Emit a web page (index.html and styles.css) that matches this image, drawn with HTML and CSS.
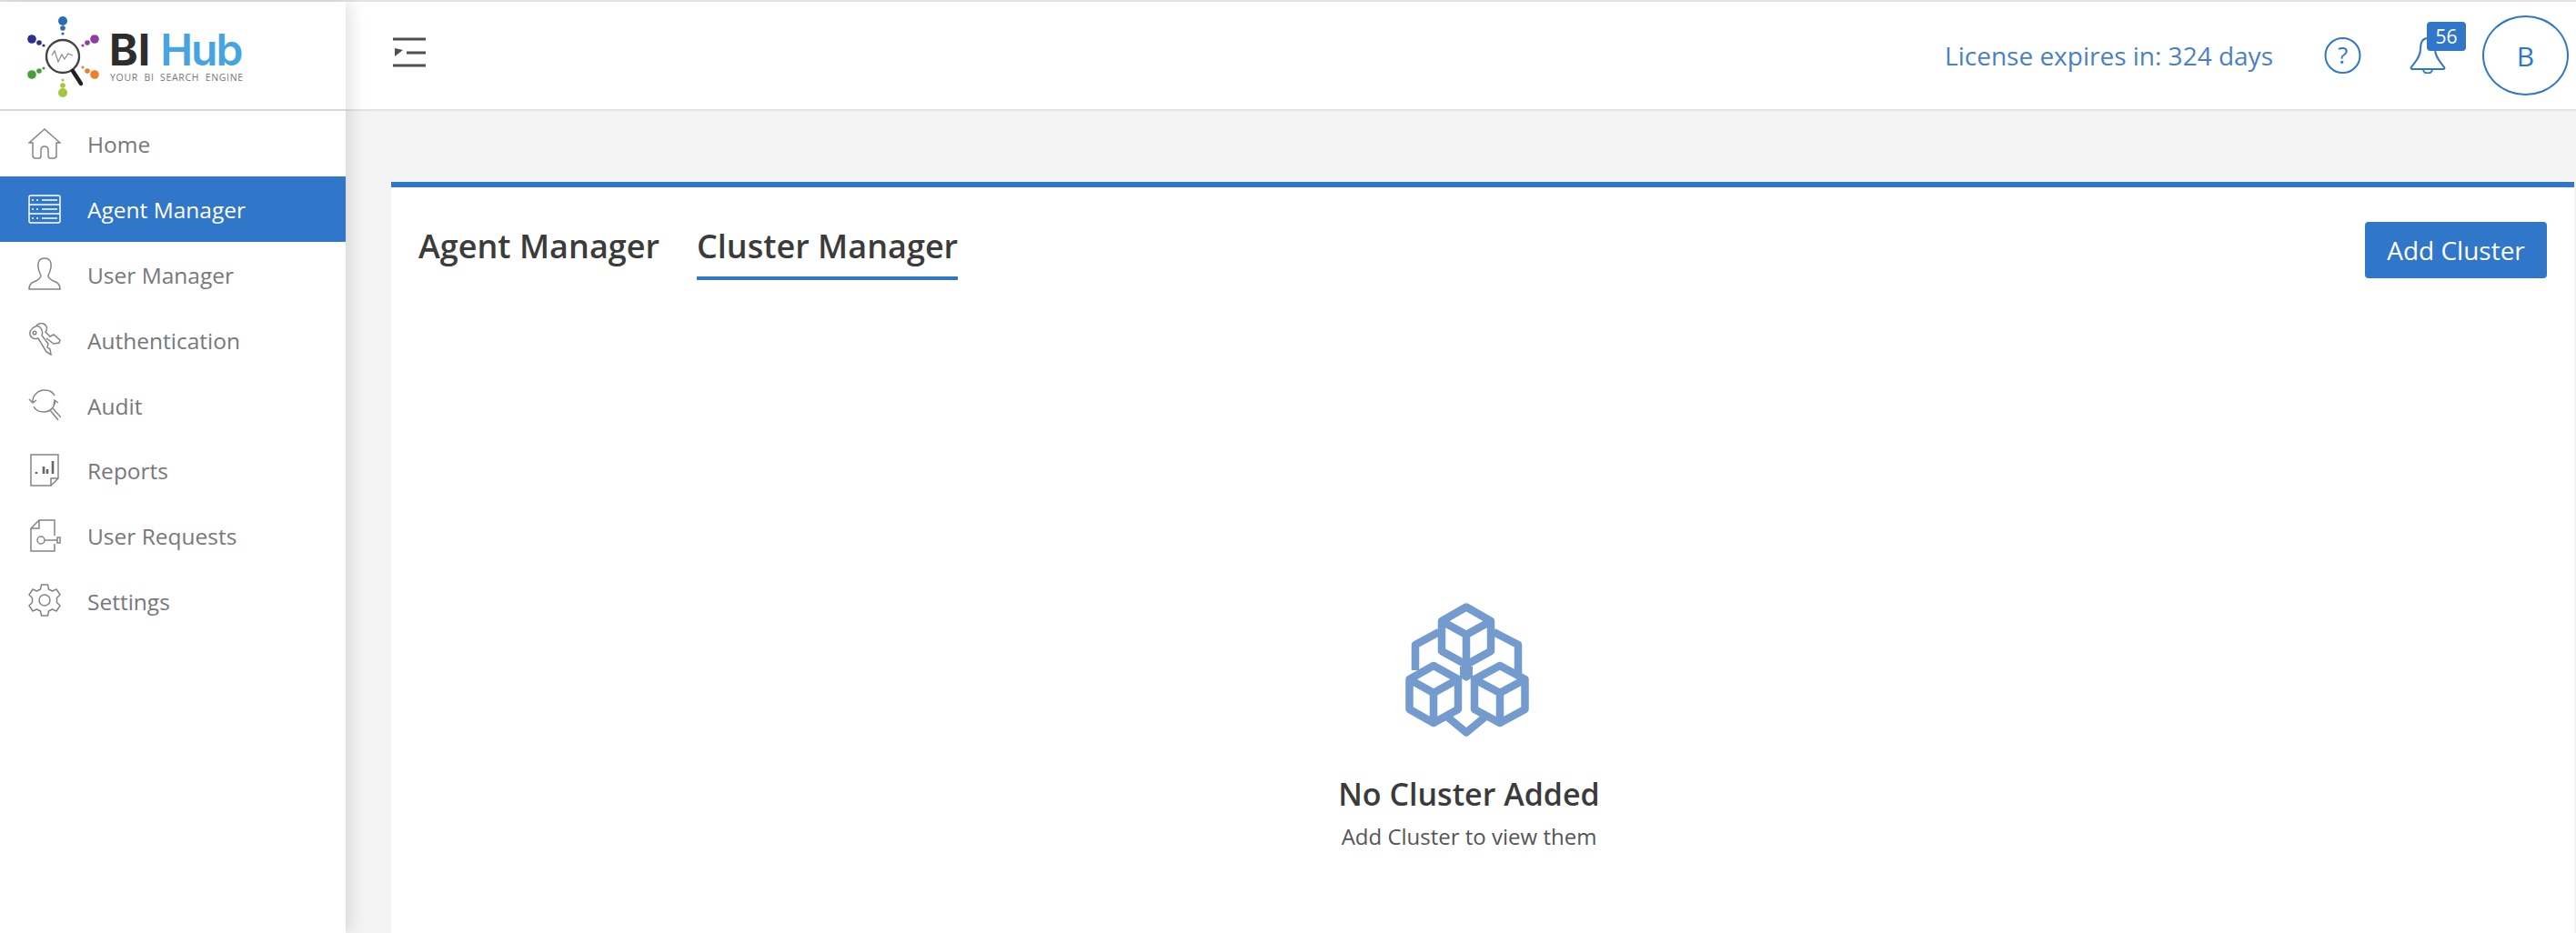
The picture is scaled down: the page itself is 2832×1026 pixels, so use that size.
FILE: index.html
```html
<!DOCTYPE html>
<html lang="en">
<head>
    <meta charset="UTF-8">
    <title>BI Hub - Cluster Manager</title>
    <link rel="stylesheet" href="styles.css">
</head>
<body>
    <div class="app">
        <aside class="sidebar">
            <div class="logo">
                <svg class="logo-mark" viewBox="0 0 80 90" width="80" height="90">
                    <g fill="#2a6db5"><circle cx="39" cy="5" r="5"/><circle cx="39" cy="13" r="2.800"/><circle cx="39" cy="19" r="1.600"/></g>
                    <g fill="#2b2f8f"><circle cx="5" cy="25" r="4.800"/><circle cx="13" cy="29" r="2.800"/><circle cx="18" cy="32" r="1.600"/></g>
                    <g fill="#8e3ea0"><circle cx="74" cy="25" r="4.800"/><circle cx="66" cy="29" r="2.800"/><circle cx="61" cy="32" r="1.600"/></g>
                    <g fill="#4a9c3c"><circle cx="5" cy="64" r="4.800"/><circle cx="13" cy="60" r="2.800"/><circle cx="18" cy="57" r="1.600"/></g>
                    <g fill="#ee7d2d"><circle cx="74" cy="64" r="4.800"/><circle cx="66" cy="60" r="2.800"/><circle cx="61" cy="56" r="1.600"/></g>
                    <g fill="#a4c53c"><circle cx="39" cy="84" r="5"/><circle cx="39" cy="76" r="2.800"/><circle cx="39" cy="70" r="1.600"/></g>
                    <circle cx="39" cy="44" r="18" fill="#fff" stroke="#444" stroke-width="2.400"/>
                    <path d="M50 60 L59 74" stroke="#222" stroke-width="4.500" stroke-linecap="round"/>
                    <path d="M27 43 L30 38 L34 50 L38 42 L41 47 L45 41 L50 43" fill="none" stroke="#888" stroke-width="1.200"/>
                </svg>
                <div class="logo-text">
                    <div class="logo-name"><span class="logo-bi">BI</span><span class="logo-hub">Hub</span></div>
                    <div class="logo-tag">YOUR BI SEARCH ENGINE</div>
                </div>
            </div>
            <nav class="menu">
                <a class="menu-item">
                    <svg class="menu-icon" viewBox="0 0 36 36"><path d="M1 17 L18 2 L35 17 L31 17 L31 31 Q31 34 28 34 L24 34 Q22 34 22 31 L22 25 Q22 21 18 21 Q14 21 14 25 L14 31 Q14 34 12 34 L8 34 Q5 34 5 31 L5 17 Z"/></svg>
                    <span>Home</span>
                </a>
                <a class="menu-item active">
                    <svg class="menu-icon" viewBox="0 0 36 32"><rect x="1" y="1" width="34" height="30" rx="2"/><path d="M1 11 H35 M1 21 H35 M4 6 H6 M9 6 H11 M15 6 H32 M4 16 H6 M9 16 H11 M15 16 H32 M4 26 H6 M9 26 H11 M15 26 H32"/></svg>
                    <span>Agent Manager</span>
                </a>
                <a class="menu-item">
                    <svg class="menu-icon" viewBox="0 0 36 36"><path d="M18 1 C12 1 10 6 11 11 C11.500 15 13 18 14 20 C14 23 11 25 6 27 C2 28.500 1 31 1 35 L35 35 C35 31 34 28.500 30 27 C25 25 22 23 22 20 C23 18 24.500 15 25 11 C26 6 24 1 18 1 Z"/></svg>
                    <span>User Manager</span>
                </a>
                <a class="menu-item">
                    <svg class="menu-icon" viewBox="0 0 36 36"><path d="M8 4 C3 6 0 11 3 15 C5 18 9 18 11 17 L20 32 L25 35 L24 29 L21 27 L22 23 L15 14 C17 9 13 2 8 4 Z"/><path d="M9 3 C13 -1 18 0 20 4 C21 7 20 9 19 10 L24 15 L28 13 L35 19 L34 22 L28 23 L20 17"/><circle cx="7" cy="11" r="1.800"/></svg>
                    <span>Authentication</span>
                </a>
                <a class="menu-item">
                    <svg class="menu-icon" viewBox="0 0 36 36"><path d="M1 12 L5 16 L9 13 M5 16 C4 8 11 2 18 2 C23 2 27 4 29 8 M28 19 L29 13 L33 16 M29.500 14 C29 21 24 26 17 26 C12 26 8 24 6 20"/><path d="M24 24 L33 35 M27 22 L36 32"/></svg>
                    <span>Audit</span>
                </a>
                <a class="menu-item">
                    <svg class="menu-icon" viewBox="0 0 36 36"><path d="M3 1 H33 V27 L25 35 H3 Z M33 27 H25 V35"/><path class="icon-bold" d="M9 20 V22 M17 14 V22 M21 17 V22 M27 8 V22"/></svg>
                    <span>Reports</span>
                </a>
                <a class="menu-item">
                    <svg class="menu-icon" viewBox="0 0 36 36"><path d="M29 18 V1 H12 L3 10 V35 H29 V27 M12 1 V10 H3"/><circle cx="14" cy="23" r="4"/><path d="M18 23 H32 M32 20 H35 V26 H32 Z"/></svg>
                    <span>User Requests</span>
                </a>
                <a class="menu-item">
                    <svg class="menu-icon" viewBox="0 0 36 36"><path d="M14.500 1 H21.500 L22.500 6 L26.500 8 L31 6 L35 12 L31.500 15.500 V20.500 L35 24 L31 30 L26.500 28 L22.500 30 L21.500 35 H14.500 L13.500 30 L9.500 28 L5 30 L1 24 L4.500 20.500 V15.500 L1 12 L5 6 L9.500 8 L13.500 6 Z" stroke-linejoin="round"/><circle cx="18" cy="18" r="6"/></svg>
                    <span>Settings</span>
                </a>
            </nav>
        </aside>
        <div class="page">
            <header class="topbar">
                <svg class="toggle" viewBox="0 0 36 33" width="36" height="33"><path d="M0 2 H36 M15 17 H36 M0 31 H36" stroke="#4f4f4f" stroke-width="3" fill="none"/><path d="M2 12 L11 14 L2 21 Z" fill="#4f4f4f"/></svg>
                <div class="topbar-right">
                    <span class="license">License expires in: 324 days</span>
                    <svg class="help" viewBox="0 0 41 40" width="41" height="40"><circle cx="20.500" cy="20" r="19" fill="none" stroke="#3076c9" stroke-width="2"/><text x="20.500" y="29" text-anchor="middle" class="help-mark">?</text></svg>
                    <div class="bell">
                        <svg viewBox="0 0 40 40" width="40" height="40"><path d="M20 1 C13 1 12 7 12 13 C12 22 6 27 2 33 C1 34 2 35 3 35 H37 C38 35 39 34 38 33 C34 27 28 22 28 13 C28 7 27 1 20 1 Z M15 35 C15 41 25 41 25 35" fill="#fff" stroke="#3076c9" stroke-width="2"/></svg>
                        <span class="badge">56</span>
                    </div>
                    <div class="avatar">B</div>
                </div>
            </header>
            <main class="content">
                <section class="card">
                    <div class="card-head">
                        <div class="tabs">
                            <a class="tab">Agent Manager</a>
                            <a class="tab active">Cluster Manager</a>
                        </div>
                        <button class="add-btn">Add Cluster</button>
                    </div>
                    <div class="empty">
                        <svg class="empty-icon" viewBox="0 0 136 147" width="136" height="147">
                            <g fill="none" stroke="#739bcd" stroke-width="8.500" stroke-linejoin="round">
                                <path d="M67 4.500 L94 20 V53 L67 68 L40 53 V20 Z M40 20 L67 35 L94 20 M67 35 V68"/>
                                <path d="M37 32 L11 46 V74 M97 32 L124 46 V77"/>
                                <path d="M31 69 L58 84 V117 L31 132 L4.500 117 V84 Z M4.500 84 L31 99 L58 84 M31 99 V132"/>
                                <path d="M104 69 L131.500 84 V117 L104 132 L76 117 V84 Z M76 84 L104 99 L131.500 84 M104 99 V132"/>
                                <path d="M67 68 V78 M47 126 L67 142.500 L87 126"/>
                            </g>
                            <path d="M60 70 H74 V82 L67 86 L60 82 Z" fill="#739bcd"/>
                        </svg>
                        <h3 class="empty-title">No Cluster Added</h3>
                        <p class="empty-sub">Add Cluster to view them</p>
                    </div>
                </section>
            </main>
        </div>
    </div>
</body>
</html>
```

FILE: styles.css
```css
* {
    box-sizing: border-box;
}
html, body {
    height: 100%;
}
body {
    margin: 0;
    font-family: "Open Sans", Arial, sans-serif;
    background-color: #f4f4f4;
    overflow: hidden;
}
.app {
    display: flex;
    height: 1026px;
    border-top: 2px solid #e4e4e4;
}
.sidebar {
    width: 380px;
    flex-shrink: 0;
    background-color: #fff;
    box-shadow: 4px 0 18px rgba(0, 0, 0, 0.13);
    position: relative;
    z-index: 2;
}
.logo {
    height: 120px;
    display: flex;
    align-items: center;
    padding: 3px 0 0 30px;
    gap: 10px;
    border-bottom: 2px solid #d9d9d9;
}
.logo-text {
    width: 150px;
    padding-top: 2px;
}
.logo-name {
    display: flex;
    gap: 11px;
    font-family: Inter, "Open Sans", sans-serif;
    font-size: 48px;
    font-weight: 700;
    line-height: 38px;
    white-space: nowrap;
}
.logo-bi {
    color: #2d2d2d;
}
.logo-hub {
    color: #46a5e0;
    font-weight: 600;
    letter-spacing: -2px;
}
.logo-tag {
    font-size: 10.500px;
    line-height: 14px;
    letter-spacing: 0.700px;
    word-spacing: 3px;
    color: #777;
    white-space: nowrap;
    margin-top: 4px;
    padding-left: 1px;
}
.menu {
    display: flex;
    flex-direction: column;
}
.menu-item {
    height: 71.800px;
    display: flex;
    align-items: center;
    padding-left: 31px;
    gap: 29px;
    font-size: 24.500px;
    color: #77777c;
}
.menu-item span {
    padding-top: 2px;
}
.menu-item.active {
    background-color: #3076c9;
    color: #fff;
}
.menu-icon {
    width: 36px;
    height: 36px;
    flex-shrink: 0;
    fill: none;
    stroke: #858585;
    stroke-width: 1.500;
}
.menu-item.active .menu-icon {
    stroke: #fff;
}
.icon-bold {
    stroke-width: 2.600;
    stroke: #666;
}
.page {
    flex: 1;
    display: flex;
    flex-direction: column;
    min-width: 0;
}
.topbar {
    height: 120px;
    flex-shrink: 0;
    background-color: #fff;
    border-bottom: 2px solid #e2e2e2;
    display: flex;
    align-items: center;
    justify-content: space-between;
    padding: 0 8px 0 52px;
}
.toggle {
    margin-bottom: 7px;
}
.topbar-right {
    display: flex;
    align-items: center;
}
.license {
    font-size: 28px;
    color: #4a7fc9;
    white-space: nowrap;
}
.help {
    margin-left: 56px;
}
.help-mark {
    font-family: "Open Sans", sans-serif;
    font-size: 26px;
    fill: #3076c9;
}
.bell {
    position: relative;
    width: 40px;
    height: 40px;
    margin-left: 53px;
}
.badge {
    position: absolute;
    top: -17px;
    left: 19px;
    width: 43px;
    height: 32px;
    background-color: #3076c9;
    color: #fff;
    border-radius: 4px;
    font-size: 21px;
    line-height: 32px;
    text-align: center;
}
.avatar {
    width: 95px;
    height: 88px;
    margin-left: 40px;
    border: 2px solid #3076c9;
    border-radius: 50%;
    display: flex;
    align-items: center;
    justify-content: center;
    font-size: 30px;
    color: #3076c9;
}
.content {
    flex: 1;
    padding: 78px 2px 0 50px;
    min-height: 0;
}
.card {
    height: 100%;
    background-color: #fff;
    border-top: 6px solid #3076c9;
    padding: 0 30px;
}
.card-head {
    display: flex;
    justify-content: space-between;
    align-items: flex-start;
    padding-top: 38px;
}
.tabs {
    display: flex;
    gap: 41px;
}
.tab {
    font-size: 36px;
    font-weight: 600;
    color: #3b3b3b;
    height: 64px;
    line-height: 54px;
}
.tab.active {
    border-bottom: 4px solid #3076c9;
}
.add-btn {
    width: 200px;
    height: 62px;
    background-color: #3076c9;
    color: #fff;
    border: none;
    border-radius: 4px;
    font-family: "Open Sans", Arial, sans-serif;
    font-size: 28px;
    cursor: pointer;
}
.empty {
    display: flex;
    flex-direction: column;
    align-items: center;
    padding: 355px 30px 0 0;
}
.empty-icon {
    margin-right: 4px;
}
.empty-title {
    margin: 41px 0 0;
    font-size: 34px;
    font-weight: 600;
    color: #3b3b3b;
    line-height: 44px;
}
.empty-sub {
    margin: 10px 0 0;
    font-size: 24px;
    color: #555;
    line-height: 30px;
}
```
